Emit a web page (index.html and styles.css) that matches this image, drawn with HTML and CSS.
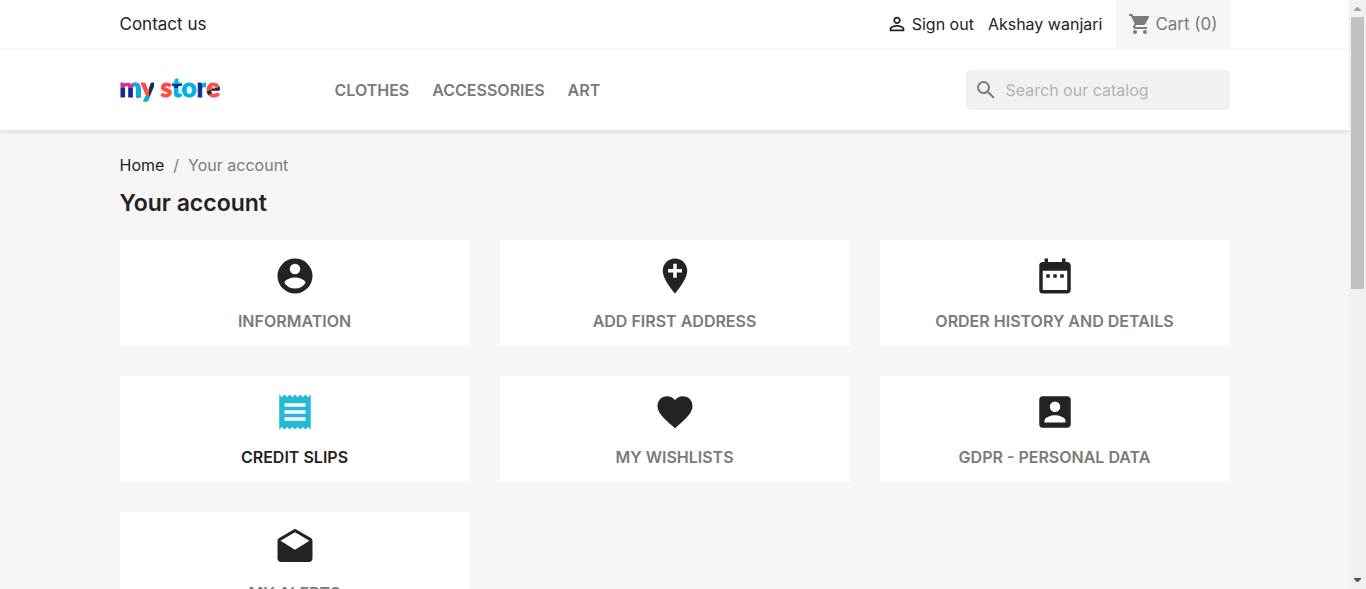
FILE: index.html
```html
<!DOCTYPE html>
<html lang="en">
<head>
<meta charset="utf-8">
<title>Your account</title>
<link rel="stylesheet" href="styles.css">
</head>
<body>
<div class="page">
  <header class="header">
    <div class="topbar">
      <div class="container topbar-row">
        <a class="link contact" href="#">Contact us</a>
        <div class="user">
          <a class="link signout" href="#"><svg class="icon-small" viewBox="0 0 24 24"><path d="M12 5.900a2.100 2.100 0 1 1 0 4.200 2.100 2.100 0 0 1 0-4.200m0 9c2.970 0 6.100 1.460 6.100 2.100v1.100H5.900V17c0-.64 3.130-2.100 6.100-2.100M12 4C9.790 4 8 5.790 8 8s1.790 4 4 4 4-1.790 4-4-1.790-4-4-4zm0 9c-2.670 0-8 1.340-8 4v3h16v-3c0-2.660-5.330-4-8-4z"/></svg>Sign out</a>
          <a class="link" href="#">Akshay wanjari</a>
          <a class="cart" href="#"><svg class="icon-medium" viewBox="0 0 24 24"><path d="M7 18c-1.100 0-1.990.9-1.990 2S5.900 22 7 22s2-.9 2-2-.9-2-2-2zM1 2v2h2l3.600 7.590-1.350 2.450c-.16.28-.25.61-.25.960 0 1.100.9 2 2 2h12v-2H7.420c-.14 0-.25-.11-.25-.25l.03-.12.900-1.630h7.450c.75 0 1.410-.41 1.750-1.030l3.580-6.490A1 1 0 0 0 20 4H5.210l-.94-2H1zm16 16c-1.100 0-1.990.9-1.990 2s.89 2 1.990 2 2-.9 2-2-.9-2-2-2z"/></svg>Cart (0)</a>
        </div>
      </div>
    </div>
    <div class="container main-row">
      <a class="logo" href="#" aria-label="my store"><span class="m">m</span><span class="y">y</span> <span class="s">s</span><span class="t">t</span><span class="o">o</span><span class="r">r</span><span class="e">e</span></a>
      <nav class="nav">
        <a href="#">Clothes</a>
        <a href="#">Accessories</a>
        <a href="#">Art</a>
      </nav>
      <form class="search">
        <svg class="icon-medium" viewBox="0 0 24 24"><path d="M15.500 14h-.79l-.28-.27A6.470 6.470 0 0 0 16 9.500 6.500 6.500 0 1 0 9.500 16c1.610 0 3.090-.59 4.230-1.570l.27.28v.79l5 4.990L20.490 19l-4.990-5zm-6 0C7.010 14 5 11.990 5 9.500S7.010 5 9.500 5 14 7.010 14 9.500 11.990 14 9.500 14z"/></svg>
        <input type="text" placeholder="Search our catalog" aria-label="Search">
      </form>
    </div>
  </header>
  <main class="container content">
    <nav class="breadcrumb" aria-label="Breadcrumb"><a class="link" href="#">Home</a><span>/</span><span>Your account</span></nav>
    <h1>Your account</h1>
    <div class="cards">
      <a class="card" href="#"><svg viewBox="0 0 24 24"><path d="M12 2a10 10 0 1 0 0 20 10 10 0 0 0 0-20zm0 3a3 3 0 1 1 0 6 3 3 0 0 1 0-6zm0 14.200a7.200 7.200 0 0 1-6-3.220c.03-1.990 4-3.080 6-3.080 1.990 0 5.970 1.090 6 3.080a7.200 7.200 0 0 1-6 3.220z"/></svg><span>Information</span></a>
      <a class="card" href="#"><svg viewBox="0 0 24 24"><path d="M12 2C8.140 2 5 5.140 5 9c0 5.250 7 13 7 13s7-7.750 7-13c0-3.860-3.140-7-7-7zm4 8h-3v3h-2v-3H8V8h3V5h2v3h3v2z"/></svg><span>Add first address</span></a>
      <a class="card" href="#"><svg viewBox="0 0 24 24"><path d="M9 11H7v2h2v-2zm4 0h-2v2h2v-2zm4 0h-2v2h2v-2zm2-7h-1V2h-2v2H8V2H6v2H5a2 2 0 0 0-1.990 2L3 20a2 2 0 0 0 2 2h14c1.100 0 2-.9 2-2V6c0-1.100-.9-2-2-2zm0 16H5V9h14v11z"/></svg><span>Order history and details</span></a>
      <a class="card active" href="#"><svg viewBox="0 0 24 24"><path d="M18 17H6v-2h12v2zm0-4H6v-2h12v2zm0-4H6V7h12v2zM3 22l1.500-1.500L6 22l1.500-1.500L9 22l1.500-1.500L12 22l1.500-1.500L15 22l1.500-1.500L18 22l1.500-1.500L21 22V2l-1.500 1.500L18 2l-1.500 1.500L15 2l-1.500 1.500L12 2l-1.500 1.500L9 2 7.500 3.500 6 2 4.500 3.500 3 2v20z"/></svg><span>Credit slips</span></a>
      <a class="card" href="#"><svg viewBox="0 0 24 24"><path d="M12 21.350l-1.450-1.320C5.400 15.360 2 12.280 2 8.500 2 5.420 4.420 3 7.500 3c1.740 0 3.410.81 4.500 2.090C13.090 3.810 14.760 3 16.500 3 19.580 3 22 5.420 22 8.500c0 3.780-3.400 6.860-8.550 11.540L12 21.350z"/></svg><span>My wishlists</span></a>
      <a class="card" href="#"><svg viewBox="0 0 24 24"><path d="M3 5v14a2 2 0 0 0 2 2h14c1.100 0 2-.9 2-2V5c0-1.100-.9-2-2-2H5a2 2 0 0 0-2 2zm12 4a3 3 0 1 1-6 0 3 3 0 0 1 6 0zm-9 8c0-2 4-3.100 6-3.100s6 1.100 6 3.100v1H6v-1z"/></svg><span>GDPR - Personal data</span></a>
      <a class="card" href="#"><svg viewBox="0 0 24 24"><path d="M21.990 8c0-.72-.37-1.350-.94-1.700L12 1 2.950 6.300C2.380 6.650 2 7.280 2 8v10c0 1.100.9 2 2 2h16c1.100 0 2-.9 2-2l-.01-10zM12 13L3.740 7.840 12 3l8.260 4.840L12 13z"/></svg><span>My alerts</span></a>
    </div>
  </main>
</div>
<div class="scrollbar" aria-hidden="true">
  <svg viewBox="0 0 17 17"><path fill="#a3a3a3" d="M5 11h7v-1L9 7H8l-3 3z"/></svg>
  <div class="track"><div class="thumb"></div></div>
  <svg viewBox="0 0 17 17"><path fill="#505050" d="M5 6h7v1l-3 3H8L5 7z"/></svg>
</div>
</body>
</html>
```

FILE: styles.css
```css
* { box-sizing: border-box; }
body {
  margin: 0;
  height: 100vh;
  display: flex;
  overflow: hidden;
  background: #f6f6f6;
  color: #7a7a7a;
  font: 16px/20px Inter, "Liberation Sans", sans-serif;
}
a { color: inherit; text-decoration: none; }
svg { display: block; flex: none; fill: currentColor; }
.page { flex: 1; min-width: 0; overflow: hidden; }
.container { width: 100%; max-width: 1140px; margin: 0 auto; padding: 0 15px; }
.link { color: #232323; }

.header { background: #fff; box-shadow: 0 2px 5px rgba(0, 0, 0, 0.11); }
.topbar { border-bottom: 2px solid #f6f6f6; }
.topbar-row { display: flex; align-items: center; justify-content: space-between; }
.contact { font-size: 17px; }
.user { display: flex; align-items: center; gap: 14px; }
.signout { display: flex; align-items: center; gap: 4px; }
.icon-small { width: 22px; height: 22px; }
.icon-medium { width: 24px; height: 24px; }
.cart {
  display: flex;
  align-items: center;
  gap: 3px;
  padding: 12px;
  background: #f6f6f6;
  font-size: 17px;
}

.main-row { display: flex; align-items: center; padding-top: 20px; padding-bottom: 20px; }
.logo {
  width: 215px;
  padding-bottom: 6px;
  font: 900 26px/32px Lato, sans-serif;
}
.logo span {
  color: transparent;
  -webkit-text-stroke: 1px transparent;
  background-clip: text;
  -webkit-background-clip: text;
}
.logo .m { background-image: linear-gradient(90deg, transparent 60%, #00b1e3 60%), linear-gradient(#d32ca5 53%, #0d2aa0 53%); }
.logo .y { background-image: linear-gradient(transparent 78%, #00b1e3 78%), linear-gradient(90deg, #ff4b44 60%, #0c3341 60%); }
.logo .s { background-image: linear-gradient(#ff4b44, #ff4b44); }
.logo .t { background-image: linear-gradient(#00b1e3 40%, #0d2aa0 40% 52%, #00b1e3 52%); }
.logo .o { background-image: linear-gradient(#00b1e3, #00b1e3); }
.logo .r { background-image: linear-gradient(90deg, #0d2aa0 55%, #00b1e3 55%); }
.logo .e { background-image: linear-gradient(160deg, #ff4b44 56%, #0c3341 56% 66%, #ff4b44 66%); }
.nav { display: flex; gap: 23px; flex: 1; font-weight: 600; text-transform: uppercase; }
.search {
  display: flex;
  align-items: center;
  gap: 8px;
  width: 264px;
  height: 40px;
  padding: 0 8px;
  border-radius: 5px;
  background: #f1f1f1;
}
.search input {
  flex: 1;
  min-width: 0;
  padding: 0;
  border: 0;
  outline: 0;
  background: none;
  color: #232323;
  font: inherit;
}
.search input::placeholder { color: #b3b3b3; opacity: 1; }

.content { padding-top: 25px; }
.breadcrumb { display: flex; gap: 9px; }
h1 { margin: 14px 0 23px; color: #232323; font-size: 23px; line-height: 28px; font-weight: 600; }
.cards { display: grid; grid-template-columns: repeat(3, 1fr); gap: 30px; }
.card {
  display: flex;
  flex-direction: column;
  align-items: center;
  gap: 14px;
  padding: 15px;
  background: #fff;
  font-weight: 600;
  text-transform: uppercase;
}
.card svg { width: 42px; height: 42px; color: #232323; }
.card.active { color: #232323; }
.card.active svg { color: #24b9d7; }

.scrollbar { display: flex; flex-direction: column; width: 17px; background: #f1f1f1; }
.scrollbar svg { width: 17px; height: 17px; }
.track { flex: 1; padding: 0 2px; }
.thumb { height: 49%; background: #c1c1c1; }
```
